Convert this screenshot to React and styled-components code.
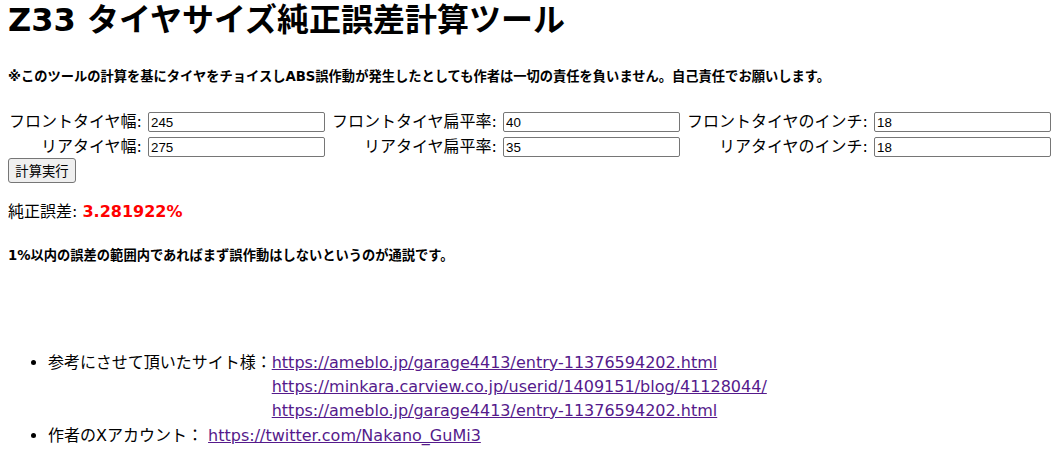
import React from "react";
import styled, { createGlobalStyle } from "styled-components";

const GlobalStyle = createGlobalStyle`
  html, body {
    margin: 0;
    padding: 0;
    background: #ffffff;
  }
  body {
    font-family: "DejaVu Sans", "Noto Sans CJK JP", sans-serif;
    color: #000000;
    font-size: 16px;
  }
`;

const Page = styled.div`
  padding: 0 8px 20px;
`;

const Title = styled.h1`
  margin: 0;
  font-size: 32px;
  font-weight: bold;
  line-height: 40px;
`;

const SmallBold = styled.p`
  margin: ${(p) => p.$top}px 0 0;
  font-size: 13.28px;
  font-weight: bold;
  line-height: 20px;
`;

const FormGrid = styled.div`
  margin-top: 24px;
  display: grid;
  grid-template-columns: 140px 177px 178px 177px 194px 177px;
  grid-auto-rows: 22px;
  row-gap: 3px;
  align-items: center;
`;

const Label = styled.label`
  text-align: right;
  padding-right: 6px;
  font-size: 16px;
  line-height: 22px;
  white-space: nowrap;
`;

const Input = styled.input`
  box-sizing: border-box;
  width: 177px;
  height: 20px;
  margin: 0;
  padding: 1px 2px;
  border: 1px solid #767676;
  border-radius: 2px;
  font-family: "Liberation Sans", Arial, sans-serif;
  font-size: 13.33px;
  color: #000;
  background: #fff;
  outline: none;
`;

const Button = styled.button`
  box-sizing: border-box;
  display: block;
  width: 68px;
  height: 25px;
  margin: 0;
  padding: 1px 6px;
  border: 1px solid #767676;
  border-radius: 3px;
  background: #efefef;
  font-family: "Noto Sans CJK JP", sans-serif;
  font-size: 13.33px;
  line-height: 20px;
  color: #000;
`;

const Result = styled.p`
  margin: 17px 0 0;
  font-size: 16px;
  line-height: 24px;
`;

const Value = styled.span`
  color: #ff0000;
  font-weight: bold;
`;

const RefList = styled.ul`
  margin: 85px 0 0;
  padding-left: 40px;
  font-size: 16px;
  line-height: 24px;
  list-style: disc;
`;

const Item = styled.li`
  line-height: ${(p) => p.$lh || 24}px;
`;

const LinkStack = styled.span`
  display: inline-block;
  vertical-align: top;
`;

const Link = styled.a`
  color: #551a8b;
  text-decoration: underline;
`;

const fields = [
  [
    { label: "フロントタイヤ幅:", value: "245" },
    { label: "フロントタイヤ扁平率:", value: "40" },
    { label: "フロントタイヤのインチ:", value: "18" },
  ],
  [
    { label: "リアタイヤ幅:", value: "275" },
    { label: "リアタイヤ扁平率:", value: "35" },
    { label: "リアタイヤのインチ:", value: "18" },
  ],
];

export default function App() {
  return (
    <>
      <GlobalStyle />
      <Page>
        <Title>Z33 タイヤサイズ純正誤差計算ツール</Title>
        <SmallBold $top={27}>
          ※このツールの計算を基にタイヤをチョイスしABS誤作動が発生したとしても作者は一切の責任を負いません。自己責任でお願いします。
        </SmallBold>
        <FormGrid>
          {fields.map((row) =>
            row.map((f) => (
              <React.Fragment key={f.label}>
                <Label>{f.label}</Label>
                <Input type="text" defaultValue={f.value} />
              </React.Fragment>
            ))
          )}
        </FormGrid>
        <Button type="button">計算実行</Button>
        <Result>
          純正誤差: <Value>3.281922%</Value>
        </Result>
        <SmallBold $top={22}>
          1%以内の誤差の範囲内であればまず誤作動はしないというのが通説です。
        </SmallBold>
        <RefList>
          <Item>
            参考にさせて頂いたサイト様：
            <LinkStack>
              <Link href="#">https://ameblo.jp/garage4413/entry-11376594202.html</Link>
              <br />
              <Link href="#">https://minkara.carview.co.jp/userid/1409151/blog/41128044/</Link>
              <br />
              <Link href="#">https://ameblo.jp/garage4413/entry-11376594202.html</Link>
            </LinkStack>
          </Item>
          <Item $lh={26}>
            作者のXアカウント： <Link href="#">https://twitter.com/Nakano_GuMi3</Link>
          </Item>
        </RefList>
      </Page>
    </>
  );
}
